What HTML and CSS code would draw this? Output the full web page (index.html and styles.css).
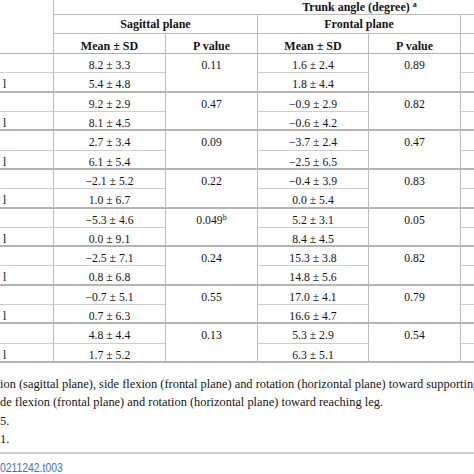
FILE: index.html
```html
<!DOCTYPE html>
<html lang="en">
<head>
<meta charset="utf-8">
<title>Trunk angle table</title>
<link rel="stylesheet" href="styles.css">
</head>
<body>
<div class="page">
  <div class="tbl">
    <div class="c corner"></div>
    <div class="c trunk">Trunk angle (degree) <sup class="sup">a</sup></div>
    <div class="c plane">Sagittal plane</div>
    <div class="c plane">Frontal plane</div>
    <div class="c plane"></div>
    <div class="c hd">Mean ± SD</div>
    <div class="c hd">P value</div>
    <div class="c hd">Mean ± SD</div>
    <div class="c hd">P value</div>
    <div class="c hd"></div>
    <div class="c hd"></div>

    <div class="c lab a"></div><div class="c a">8.2 ± 3.3</div><div class="c p">0.11</div><div class="c a">1.6 ± 2.4</div><div class="c p">0.89</div><div class="c a"></div><div class="c p"></div>
    <div class="c lab b">l</div><div class="c b">5.4 ± 4.8</div><div class="c b">1.8 ± 4.4</div><div class="c b"></div>

    <div class="c lab a"></div><div class="c a">9.2 ± 2.9</div><div class="c p">0.47</div><div class="c a">−0.9 ± 2.9</div><div class="c p">0.82</div><div class="c a"></div><div class="c p"></div>
    <div class="c lab b">l</div><div class="c b">8.1 ± 4.5</div><div class="c b">−0.6 ± 4.2</div><div class="c b"></div>

    <div class="c lab a"></div><div class="c a">2.7 ± 3.4</div><div class="c p">0.09</div><div class="c a">−3.7 ± 2.4</div><div class="c p">0.47</div><div class="c a"></div><div class="c p"></div>
    <div class="c lab b">l</div><div class="c b">6.1 ± 5.4</div><div class="c b">−2.5 ± 6.5</div><div class="c b"></div>

    <div class="c lab a"></div><div class="c a">−2.1 ± 5.2</div><div class="c p">0.22</div><div class="c a">−0.4 ± 3.9</div><div class="c p">0.83</div><div class="c a"></div><div class="c p"></div>
    <div class="c lab b">l</div><div class="c b">1.0 ± 6.7</div><div class="c b">0.0 ± 5.4</div><div class="c b"></div>

    <div class="c lab a"></div><div class="c a">−5.3 ± 4.6</div><div class="c p">0.049<sup class="sup">b</sup></div><div class="c a">5.2 ± 3.1</div><div class="c p">0.05</div><div class="c a"></div><div class="c p"></div>
    <div class="c lab b">l</div><div class="c b">0.0 ± 9.1</div><div class="c b">8.4 ± 4.5</div><div class="c b"></div>

    <div class="c lab a"></div><div class="c a">−2.5 ± 7.1</div><div class="c p">0.24</div><div class="c a">15.3 ± 3.8</div><div class="c p">0.82</div><div class="c a"></div><div class="c p"></div>
    <div class="c lab b">l</div><div class="c b">0.8 ± 6.8</div><div class="c b">14.8 ± 5.6</div><div class="c b"></div>

    <div class="c lab a"></div><div class="c a">−0.7 ± 5.1</div><div class="c p">0.55</div><div class="c a">17.0 ± 4.1</div><div class="c p">0.79</div><div class="c a"></div><div class="c p"></div>
    <div class="c lab b">l</div><div class="c b">0.7 ± 6.3</div><div class="c b">16.6 ± 4.7</div><div class="c b"></div>

    <div class="c lab a"></div><div class="c a">4.8 ± 4.4</div><div class="c p">0.13</div><div class="c a">5.3 ± 2.9</div><div class="c p">0.54</div><div class="c a"></div><div class="c p"></div>
    <div class="c lab b">l</div><div class="c b">1.7 ± 5.2</div><div class="c b">6.3 ± 5.1</div><div class="c b"></div>
  </div>

  <div class="notes">
    <div class="note">ion (sagittal plane), side flexion (frontal plane) and rotation (horizontal plane) toward supporting leg.</div>
    <div class="note">de flexion (frontal plane) and rotation (horizontal plane) toward reaching leg.</div>
    <div class="note">5.</div>
    <div class="note">1.</div>
  </div>
  <div class="rule"></div>
  <div class="doi">0211242.t003</div>
</div>
</body>
</html>
```

FILE: styles.css
```css
html, body {
  margin: 0;
  padding: 0;
  background: #ffffff;
}

body {
  width: 474px;
  height: 474px;
  overflow: hidden;
  font-family: "Liberation Serif", "Times New Roman", serif;
  color: #141414;
}

.page {
  width: 474px;
  overflow: hidden;
}

.tbl {
  display: grid;
  grid-template-columns: 54px 112px 92px 111px 92px 112px 92px;
  grid-template-rows: 15px 19px 20px repeat(16, 19.3125px);
  width: 665px;
  font-size: 11.7px;
}

.c {
  box-sizing: border-box;
  text-align: center;
  padding-top: 3px;
  line-height: 17px;
  white-space: nowrap;
  border-right: 1px solid #bcbcbc;
}

.corner {
  grid-row: span 3;
  border-bottom: 1px solid #b0b0b0;
}

.trunk {
  grid-column: span 6;
  border-right: none;
  border-bottom: 1px solid #bcbcbc;
  font-weight: bold;
  font-size: 12px;
  line-height: 15px;
  padding-top: 0;
}

.plane {
  grid-column: span 2;
  border-bottom: 1px solid #bcbcbc;
  font-weight: bold;
  font-size: 12px;
  padding-top: 1px;
}

.hd {
  border-bottom: 1px solid #b0b0b0;
  font-weight: bold;
  font-size: 12px;
  padding-top: 4px;
}

.sup {
  font-size: 8px;
  line-height: 0;
  vertical-align: 4px;
}

.lab {
  text-align: left;
  padding-left: 3px;
}

.a {
  border-bottom: 1px solid #cdcdcd;
}

.b {
  border-bottom: 2px solid #b4b4b4;
}

.p {
  grid-row: span 2;
  border-bottom: 2px solid #b4b4b4;
}

.notes {
  margin-top: 11.5px;
  font-size: 12.4px;
  line-height: 18.5px;
  white-space: nowrap;
  overflow: hidden;
}

.rule {
  height: 2px;
  margin-top: 3px;
  background: #cfcfcf;
}

.doi {
  margin-top: 7px;
  font-family: "Liberation Sans", Arial, sans-serif;
  font-size: 12.5px;
  line-height: 14px;
  color: #3a72b9;
  white-space: nowrap;
  transform: scaleX(0.83);
  transform-origin: left center;
}
```
